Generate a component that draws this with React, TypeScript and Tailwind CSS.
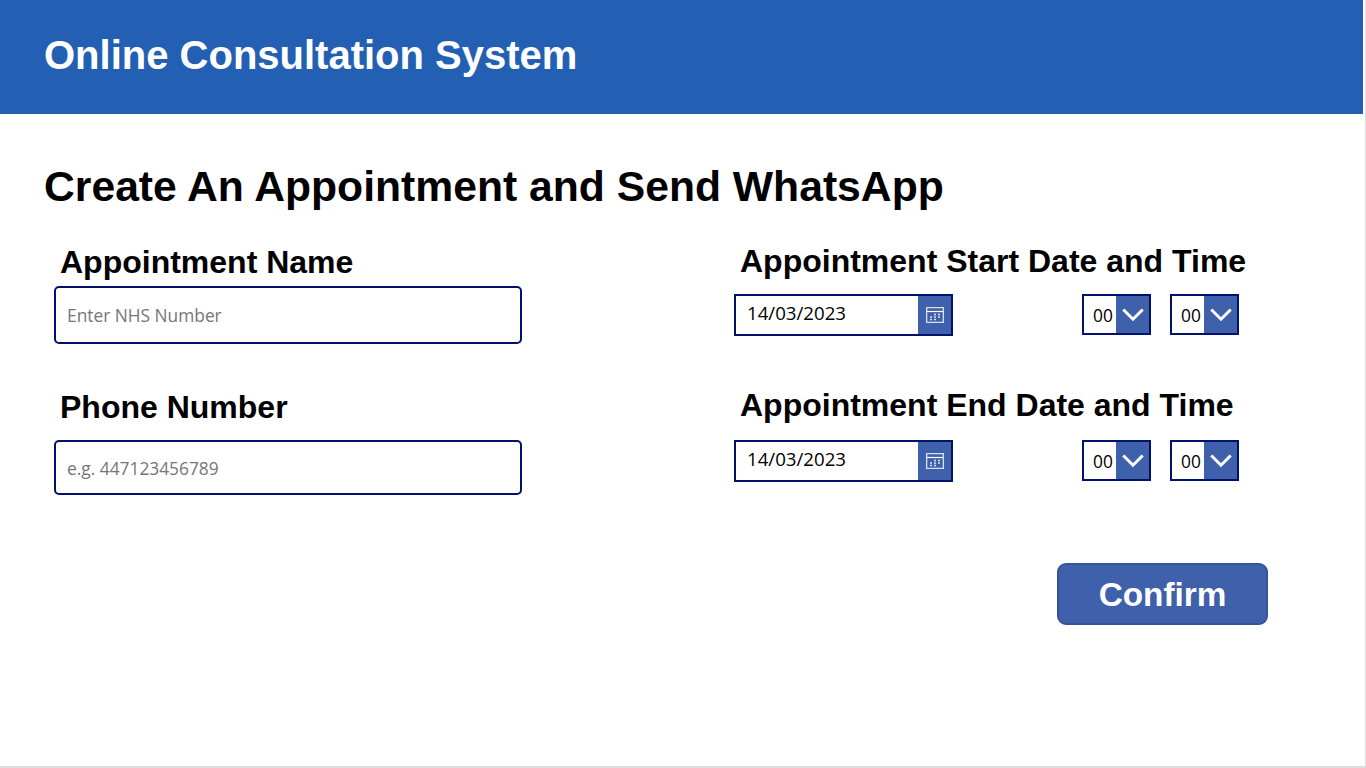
import React from "react";

function Calendar() {
  return (
    <svg width="18" height="16" viewBox="0 0 18 16" fill="none" stroke="white">
      <path d="M.65.65h16.7v14.7H.65z" strokeWidth="1.3" strokeOpacity=".8" />
      <path d="M1 4.5h16" strokeWidth="1.2" />
      <path d="M8 7.5h2M12 7.5h2M4 10h2M8 10h2M12 10h2M4 12.5h2M8 12.5h2" strokeWidth="1.6" strokeOpacity=".8" />
    </svg>
  );
}

function DateInput() {
  return (
    <div className="flex h-[42px] w-[219px] border-2 border-[#00126b] bg-white">
      <div className="flex-1 pl-[11px] pt-[5px] font-['Open_Sans',sans-serif] text-[18.67px] leading-6 text-black">14/03/2023</div>
      <button className="flex w-[33px] items-center justify-center bg-[#3f60ab]"><Calendar /></button>
    </div>
  );
}

function TimeSelect() {
  return (
    <div className="flex h-[41px] w-[69px] border-2 border-[#00126b] bg-white">
      <div className="flex-1 pl-[9px] pt-[7px] font-['Open_Sans',sans-serif] text-[17.33px] leading-6 text-black">00</div>
      <button className="flex w-[33px] items-center justify-center bg-[#3f60ab]">
        <svg width="22" height="14" viewBox="0 0 22 14" fill="none" stroke="white" strokeWidth="3"><path d="M1.3 1.5l9.7 9.7 9.7-9.7" /></svg>
      </button>
    </div>
  );
}

function Schedule({ title, headingClass }: { title: string; headingClass: string }) {
  return (
    <section>
      <h3 className={`ml-[6px] whitespace-nowrap text-[32px] font-bold leading-[36px] ${headingClass}`}>{title}</h3>
      <div className="flex">
        <DateInput />
        <div className="ml-[129px] flex gap-[19px]"><TimeSelect /><TimeSelect /></div>
      </div>
    </section>
  );
}

export default function App() {
  return (
    <div className="h-[768px] w-[1366px] overflow-hidden border-b-2 border-r border-[#dedede] bg-white font-['Liberation_Sans',sans-serif] text-black">
      <header className="h-[114px] w-[1363px] bg-[#2360b3] pl-11 pt-[32px] text-white">
        <h1 className="text-[40px] font-bold leading-[46px]">Online Consultation System</h1>
      </header>
      <h2 className="ml-11 mt-[48px] h-[81px] text-[42.67px] font-bold leading-[49px]">Create An Appointment and Send WhatsApp</h2>
      <main className="flex">
        <div className="ml-[54px] w-[468px]">
          <label className="ml-[6px] mt-[1px] block h-[42px] text-[32px] font-bold leading-[36px]">Appointment Name</label>
          <input className="block h-[58px] w-full rounded-[5px] border-2 border-[#00126b] px-[11px] font-['Open_Sans',sans-serif] text-[17.33px] placeholder:text-[#767676]" placeholder="Enter NHS Number" />
          <label className="ml-[6px] mt-[45px] block h-[51px] text-[32px] font-bold leading-[36px]">Phone Number</label>
          <input className="block h-[55px] w-full rounded-[5px] border-2 border-[#00126b] px-[11px] font-['Open_Sans',sans-serif] text-[17.33px] placeholder:text-[#767676]" placeholder="e.g. 447123456789" />
        </div>
        <div className="ml-[212px] w-[534px]">
          <Schedule title="Appointment Start Date and Time" headingClass="h-[51px]" />
          <div className="mt-[51px]"><Schedule title="Appointment End Date and Time" headingClass="h-[53px]" /></div>
          <button className="ml-[323px] mt-[81px] h-[62px] w-[211px] rounded-[9px] border-2 border-[#365396] bg-[#3f60ab] pt-[2px] text-[33.33px] font-bold text-white">Confirm</button>
        </div>
      </main>
    </div>
  );
}
